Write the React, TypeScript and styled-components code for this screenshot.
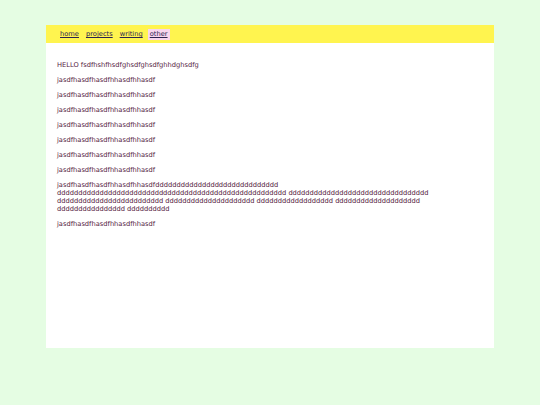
import React from 'react';
import { styled, createGlobalStyle } from 'styled-components';

const GlobalStyle = createGlobalStyle`
  html, body {
    margin: 0;
    padding: 0;
    background: #e5fde3;
  }
  body {
    font-family: 'DejaVu Sans', Verdana, sans-serif;
  }
`;

const links = ['home', 'projects', 'writing', 'other'];
const repeated = 'jasdfhasdfhasdfhhasdfhhasdf';
const d = (n: number) => 'd'.repeat(n);

const App = () => {
  return (
    <>
      <GlobalStyle />
      <Page>
        <Nav>
          {links.map((l) => (
            <NavLink key={l} href="#" $active={l === 'other'}>
              {l}
            </NavLink>
          ))}
        </Nav>
        <Content>
          <Para>HELLO fsdfhshfhsdfghsdfghsdfghhdghsdfg</Para>
          {Array.from({ length: 7 }).map((_, i) => (
            <Para key={i}>{repeated}</Para>
          ))}
          <Para>
            {repeated + d(29)} {d(54)} {d(33)} {d(25)} {d(21)} {d(18)}{' '}
            {d(20)} {d(16)} {d(10)}
          </Para>
          <Para>{repeated}</Para>
        </Content>
      </Page>
    </>
  );
};

export default App;

const Page = styled.div`
  width: 448px;
  height: 323px;
  margin: 25px auto 0;
  background: #ffffff;
  display: flex;
  flex-direction: column;
`;

const Nav = styled.nav`
  height: 18px;
  background: #fff44f;
  display: flex;
  align-items: center;
  gap: 3px;
  padding-left: 12px;
`;

const NavLink = styled.a<{ $active?: boolean }>`
  font-size: 6.7px;
  line-height: 11px;
  margin-top: 1px;
  padding: 0 2px;
  color: #2b2350;
  text-decoration: underline;
  background: ${(p) => (p.$active ? '#f8d6ee' : 'transparent')};
`;

const Content = styled.main`
  padding: 11px 11px;
  color: #55223f;
`;

const Para = styled.p`
  margin: 7px 0;
  font-size: 6.7px;
  line-height: 8px;
`;
